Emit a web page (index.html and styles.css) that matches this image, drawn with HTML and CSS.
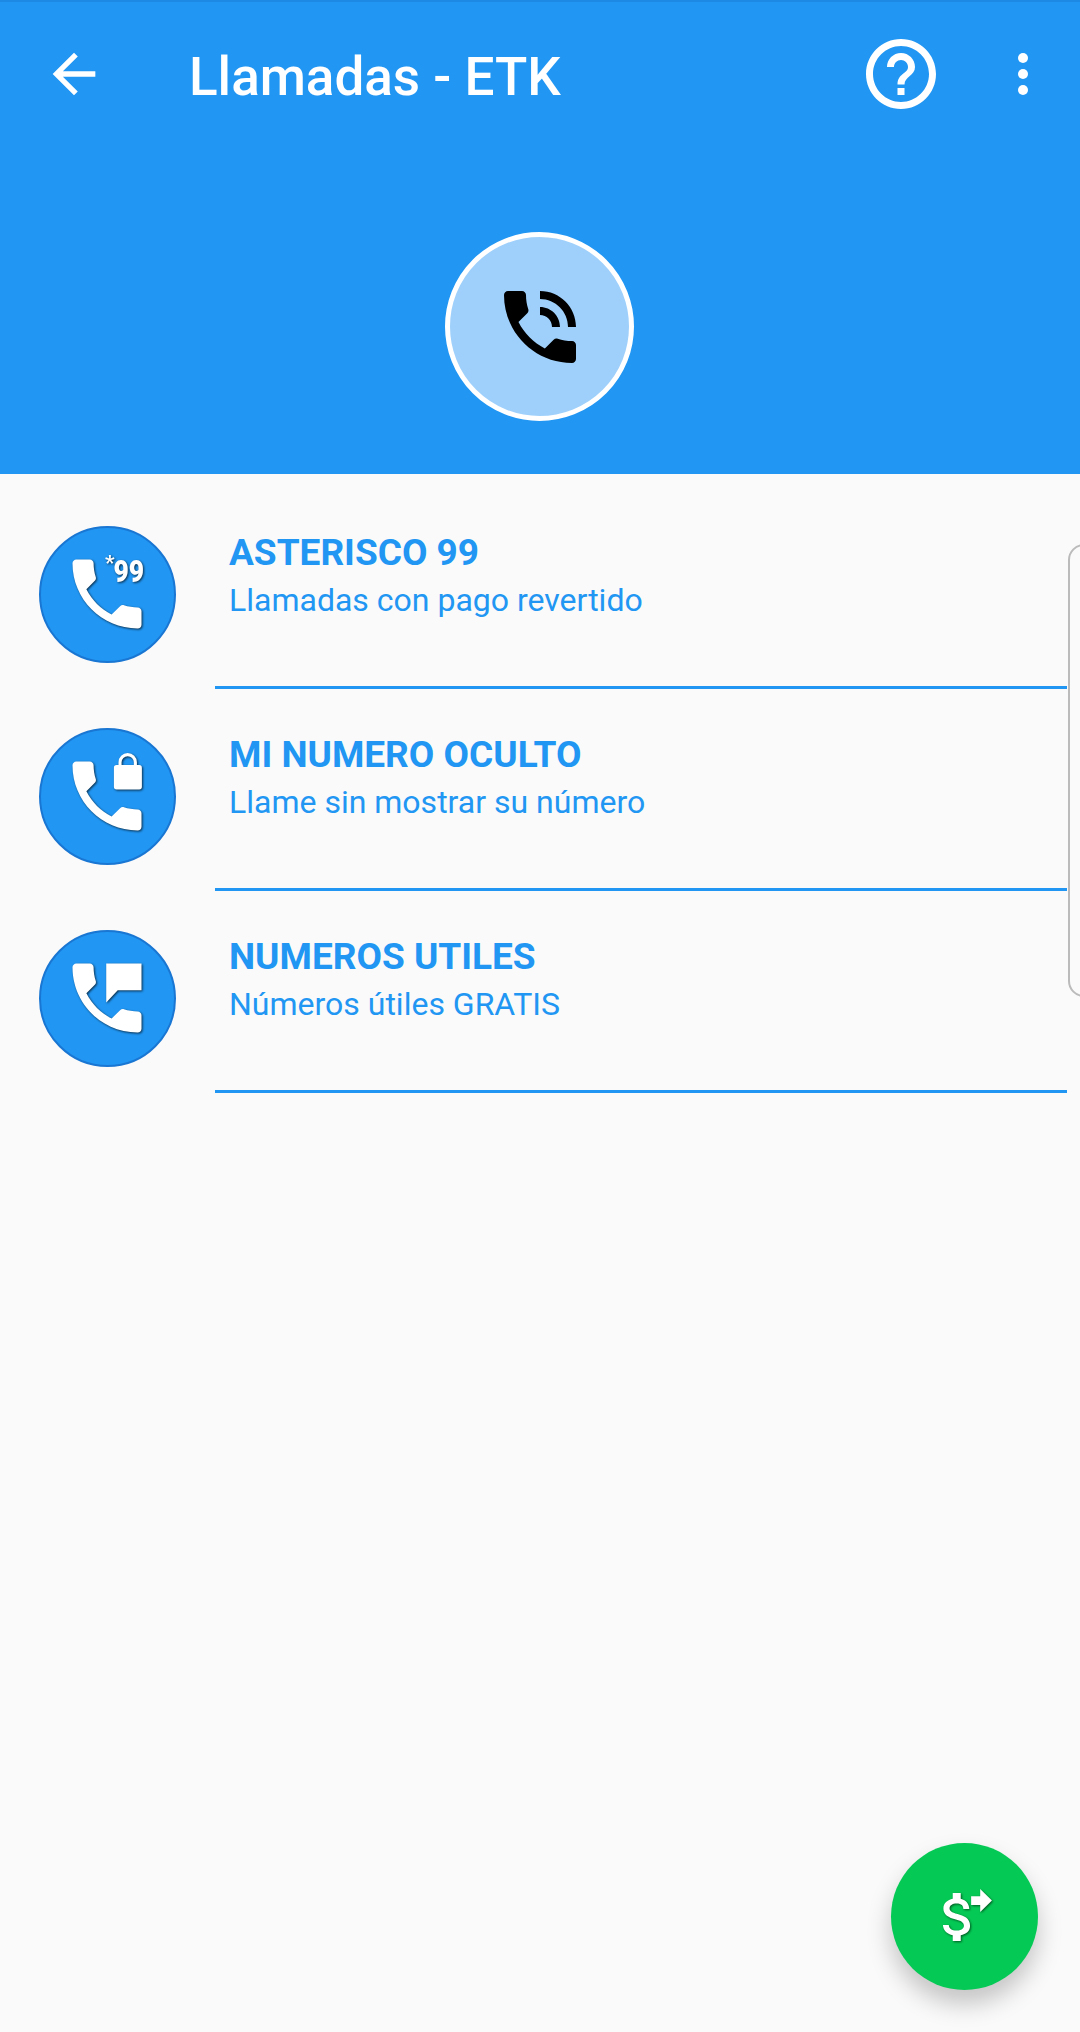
FILE: index.html
```html
<!DOCTYPE html>
<html>
<head>
    <title>Llamadas - ETK</title>
    <link rel="stylesheet" href="styles.css">
</head>
<body>
    <svg class="defs" width="0" height="0">
        <defs>
            <path id="phone" d="M20 15.5c-1.25 0-2.45-.2-3.57-.57-.35-.11-.74-.03-1.02.24l-2.2 2.2c-2.83-1.44-5.15-3.75-6.59-6.59l2.2-2.21c.28-.26.36-.65.25-1C8.7 6.45 8.5 5.25 8.5 4c0-.55-.45-1-1-1H4c-.55 0-1 .45-1 1 0 9.39 7.61 17 17 17 .55 0 1-.45 1-1v-3.5c0-.55-.45-1-1-1z"/>
        </defs>
    </svg>
    <div class="page">
        <header class="header">
            <div class="toolbar">
                <svg class="icon-back" viewBox="0 0 24 24"><path d="M20 11H7.830l5.590-5.590L12 4l-8 8 8 8 1.410-1.410L7.830 13H20v-2z"/></svg>
                <h1 class="title">Llamadas - ETK</h1>
                <svg class="icon-help" viewBox="0 0 24 24"><path d="M11 18h2v-2h-2v2zm1-16C6.480 2 2 6.480 2 12s4.480 10 10 10 10-4.480 10-10S17.520 2 12 2zm0 18c-4.410 0-8-3.590-8-8s3.590-8 8-8 8 3.590 8 8-3.590 8-8 8zm0-14c-2.210 0-4 1.790-4 4h2c0-1.100.9-2 2-2s2 .9 2 2c0 2-3 1.750-3 5h2c0-2.250 3-2.500 3-5 0-2.210-1.790-4-4-4z"/></svg>
                <div class="more"><span></span><span></span><span></span></div>
            </div>
            <div class="hero">
                <svg class="hero-icon" viewBox="0 0 24 24">
                    <use href="#phone"/>
                    <path d="M19 12h2c0-4.970-4.030-9-9-9v2c3.870 0 7 3.130 7 7zm-4 0h2c0-2.760-2.240-5-5-5v2c1.660 0 3 1.340 3 3z"/>
                </svg>
            </div>
        </header>

        <ul class="list">
            <li class="row">
                <div class="avatar">
                    <svg viewBox="0 0 24 24">
                        <use href="#phone"/>
                        <text class="star" x="11.500" y="5.800">*</text>
                        <text class="code" x="13.700" y="8.800" textLength="8" lengthAdjust="spacingAndGlyphs">99</text>
                    </svg>
                </div>
                <div class="row-text">
                    <h2>ASTERISCO 99</h2>
                    <p>Llamadas con pago revertido</p>
                </div>
            </li>
            <li class="row">
                <div class="avatar">
                    <svg viewBox="0 0 24 24">
                        <use href="#phone"/>
                        <path d="M15.400 4.500V3.200a2 2 0 0 1 4 0v1.300" fill="none" stroke="#fff" stroke-width=".8"/>
                        <rect x="13.800" y="3.900" width="7.300" height="6.400" rx=".7"/>
                    </svg>
                </div>
                <div class="row-text">
                    <h2>MI NUMERO OCULTO</h2>
                    <p>Llame sin mostrar su número</p>
                </div>
            </li>
            <li class="row">
                <div class="avatar">
                    <svg viewBox="0 0 24 24">
                        <use href="#phone"/>
                        <path d="M11.800 3H21v7h-6.200l-3 3.200z"/>
                    </svg>
                </div>
                <div class="row-text">
                    <h2>NUMEROS UTILES</h2>
                    <p>Números útiles GRATIS</p>
                </div>
            </li>
        </ul>

        <div class="edge-handle"></div>

        <div class="fab">
            <svg viewBox="0 0 29.200 24">
                <path d="M11.800 10.900c-2.270-.59-3-1.200-3-2.150 0-1.090 1.010-1.850 2.700-1.850 1.780 0 2.440.85 2.500 2.100h2.210c-.07-1.720-1.120-3.300-3.210-3.810V3h-3v2.160c-1.940.42-3.500 1.680-3.500 3.610 0 2.310 1.910 3.460 4.700 4.130 2.500.6 3 1.480 3 2.410 0 .69-.49 1.790-2.700 1.790-2.060 0-2.870-.92-2.980-2.100h-2.200c.12 2.190 1.760 3.420 3.680 3.830V21h3v-2.150c1.950-.37 3.500-1.500 3.500-3.550 0-2.840-2.430-3.810-4.700-4.400z"/>
                <path d="M16.900 4.200h3.400V1.500l4.400 4.300-4.400 4.300V7.500h-3.400z"/>
            </svg>
        </div>
    </div>
</body>
</html>
```

FILE: styles.css
```css
* {
    box-sizing: border-box;
}
html, body {
    margin: 0;
    padding: 0;
}
body {
    font-family: Roboto, Arial, sans-serif;
    background-color: #fafafa;
}
.defs {
    position: absolute;
}
.page {
    position: relative;
    width: 1080px;
    height: 2032px;
    overflow: hidden;
}

/* cabecera */
.header {
    height: 474px;
    background: #2196f3;
    border-top: 2px solid #1e88e5;
}
.toolbar {
    display: flex;
    align-items: center;
    height: 144px;
    padding-left: 42px;
}
.icon-back {
    width: 64px;
    height: 64px;
    flex: none;
    fill: white;
}
.title {
    margin: 5px 0 0 83px;
    flex: 1;
    color: white;
    font-size: 53px;
    font-weight: 500;
}
.icon-help {
    width: 84px;
    height: 84px;
    flex: none;
    fill: white;
}
.more {
    display: flex;
    flex-direction: column;
    gap: 5.500px;
    margin: 0 52px 0 75px;
}
.more span {
    width: 10.500px;
    height: 10.500px;
    border-radius: 50%;
    background: white;
}
.hero {
    display: flex;
    align-items: center;
    justify-content: center;
    width: 189px;
    height: 189px;
    margin: 86px 0 0 445px;
    background: #9fd0fb;
    border: 5px solid white;
    border-radius: 50%;
}
.hero-icon {
    width: 96px;
    height: 96px;
}

/* lista */
.list {
    list-style: none;
    margin: 0;
    padding: 13px 0 0;
}
.row {
    display: flex;
    height: 202px;
}
.avatar {
    display: flex;
    align-items: center;
    justify-content: center;
    flex: none;
    width: 137px;
    height: 137px;
    margin: 39px 0 0 39px;
    background: #2196f3;
    border: 2px solid #1976d2;
    border-radius: 50%;
}
.avatar svg {
    width: 92px;
    height: 92px;
    margin: -1px 1px 0 0;
    fill: white;
    overflow: visible;
    filter: drop-shadow(1px 1px 1px rgba(0, 0, 0, 0.7));
}
.code {
    font-family: Roboto, sans-serif;
    font-size: 8.300px;
    font-weight: 900;
}
.star {
    font-family: Roboto, sans-serif;
    font-size: 5.500px;
    font-weight: 700;
}
.row-text {
    flex: 1;
    margin: 0 13px 0 39px;
    padding: 45px 0 0 14px;
    border-bottom: 3px solid #2196f3;
    color: #2196f3;
}
.row-text h2 {
    margin: 0;
    font-size: 37px;
    line-height: 42px;
    font-weight: 700;
}
.row-text p {
    margin: 7px 0 0;
    font-size: 32px;
    line-height: 38px;
}

/* overlays */
.edge-handle {
    position: absolute;
    top: 544px;
    right: -20px;
    width: 32px;
    height: 453px;
    border: 2px solid #bbb;
    border-radius: 20px;
}
.fab {
    position: absolute;
    left: 891px;
    top: 1843px;
    display: flex;
    align-items: center;
    justify-content: center;
    width: 147px;
    height: 147px;
    background: #05c955;
    border-radius: 50%;
    box-shadow: 0 14px 24px rgba(0, 0, 0, 0.22);
}
.fab svg {
    width: 78px;
    height: 64px;
    fill: white;
    filter: drop-shadow(1px 1px 1px rgba(0, 60, 20, 0.8));
}
```
